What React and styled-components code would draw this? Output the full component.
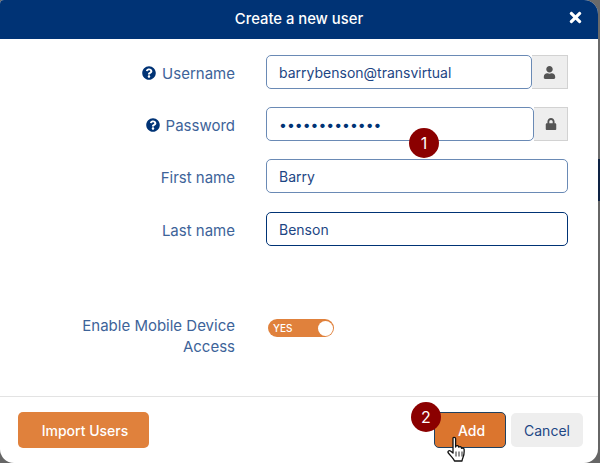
import React from 'react';
import styled, { createGlobalStyle } from 'styled-components';
import { FaQuestionCircle, FaUser, FaLock, FaTimes } from 'react-icons/fa';

const GlobalStyle = createGlobalStyle`
	html, body {
		margin: 0;
		padding: 0;
		width: 600px;
		height: 463px;
		overflow: hidden;
		font-family: Inter, "Liberation Sans", sans-serif;
		background: linear-gradient(to bottom, #6a6a6a 0, #6a6a6a 159px, #0e2344 159px, #0e2344 201px, #666 201px, #666 100%);
	}
`

const Modal = styled.div`
	width: 598px;
	height: 463px;
	display: flex;
	flex-direction: column;
	position: relative;
	background: #fff;
	border-radius: 4px 14px 14px 14px;
	overflow: hidden;
`

const Header = styled.div`
	height: 39px;
	flex: none;
	display: flex;
	align-items: center;
	justify-content: center;
	position: relative;
	padding-bottom: 1px;
	box-sizing: border-box;
	background: #003375;
	color: #fff;
	font-size: 14.8px;
	font-weight: 500;
`

const CloseBtn = styled.span`
	position: absolute;
	right: 14px;
	top: 9px;
	display: flex;
	font-size: 17px;
	color: #fff;
`

const Body = styled.div`
	flex: 1;
	display: flex;
	flex-direction: column;
	padding-top: 16px;
`

const Row = styled.div`
	display: grid;
	grid-template-columns: 236px 302px;
	column-gap: 30px;
	align-items: center;
	margin-bottom: ${props => props.gap || 18}px;
`

const Label = styled.label`
	display: flex;
	align-items: center;
	justify-content: flex-end;
	gap: 6px;
	padding: 2px 1px 0 0;
	font-size: 15px;
	line-height: 21px;
	color: #3d6399;
	text-align: right;
`

const HelpIcon = styled(FaQuestionCircle)`
	width: 14px;
	height: 14px;
	color: #003375;
`

const InputGroup = styled.div`
	display: flex;
	width: 100%;
`

const Input = styled.div`
	flex: 1;
	height: 34px;
	box-sizing: border-box;
	display: flex;
	align-items: center;
	padding-left: 12px;
	border: 1px solid ${props => props.focused ? '#003375' : '#6a8ab5'};
	border-radius: 5px;
	background: #fff;
	font-size: 14px;
	color: #1d4684;
`

const Dots = styled.span`
	font-size: 14px;
	color: #003375;
`

const Addon = styled.div`
	width: ${props => props.width}px;
	height: 34px;
	box-sizing: border-box;
	display: flex;
	align-items: center;
	justify-content: center;
	background: #eee;
	border: 1px solid #d2d2d2;
	border-left: none;
	color: #555;
	font-size: ${props => props.iconSize}px;
`

const ToggleRow = styled(Row)`
	margin-top: 51px;
	align-items: start;
`

const ToggleLabel = styled(Label)`
	display: block;
	padding-top: 0;
`

const Toggle = styled.div`
	width: 66px;
	height: 18px;
	margin: 4px 0 0 2px;
	display: flex;
	align-items: center;
	justify-content: space-between;
	box-sizing: border-box;
	padding: 0 1.5px 0 5px;
	border-radius: 9px;
	background: #e0813c;
	color: #fff;
	font-size: 10px;
	font-weight: 500;
`

const Knob = styled.span`
	width: 15px;
	height: 15px;
	border-radius: 50%;
	background: #fff;
`

const Footer = styled.div`
	height: 67px;
	flex: none;
	box-sizing: border-box;
	display: flex;
	justify-content: space-between;
	align-items: flex-start;
	padding: 15px 15px 0 18px;
	border-top: 1px solid #e3e3e3;
`

const Actions = styled.div`
	display: flex;
	align-items: center;
	gap: 5px;
`

const Button = styled.button`
	width: ${props => props.width}px;
	height: 36px;
	box-sizing: border-box;
	border: none;
	border-radius: 5px;
	background: #e0813c;
	color: #fff;
	font-family: inherit;
	font-size: 14px;
	font-weight: 500;
	padding: 0 0 0 3px;
`

const AddBtn = styled(Button)`
	background: #db752e;
	border: 1px solid #1d4060;
`

const CancelBtn = styled(Button)`
	height: 34px;
	padding: 0;
	background: #eee;
	color: #1d4684;
	font-weight: 400;
`

const Badge = styled.span`
	position: absolute;
	left: ${props => props.x}px;
	top: ${props => props.y}px;
	width: 30px;
	height: 30px;
	display: flex;
	align-items: center;
	justify-content: center;
	border-radius: 50%;
	background: #8b0000;
	color: #fff;
	font-size: 16px;
`

const Cursor = styled.svg`
	position: absolute;
	left: 447px;
	top: 436px;
	width: 22px;
	height: 27px;
`

const App = () => (
	<>
		<GlobalStyle />
		<Modal>
			<Header>
				Create a new user
				<CloseBtn><FaTimes /></CloseBtn>
			</Header>
			<Body>
				<Row>
					<Label><HelpIcon />Username</Label>
					<InputGroup>
						<Input>barrybenson@transvirtual</Input>
						<Addon width={36} iconSize={13}><FaUser /></Addon>
					</InputGroup>
				</Row>
				<Row>
					<Label><HelpIcon />Password</Label>
					<InputGroup>
						<Input><Dots>•••••••••••••</Dots></Input>
						<Addon width={34} iconSize={12}><FaLock /></Addon>
					</InputGroup>
				</Row>
				<Row gap={19}>
					<Label>First name</Label>
					<Input>Barry</Input>
				</Row>
				<Row>
					<Label>Last name</Label>
					<Input focused>Benson</Input>
				</Row>
				<ToggleRow>
					<ToggleLabel>Enable Mobile Device<br />Access</ToggleLabel>
					<Toggle>YES<Knob /></Toggle>
				</ToggleRow>
			</Body>
			<Footer>
				<Button width={131}>Import Users</Button>
				<Actions>
					<AddBtn width={72}>Add</AddBtn>
					<CancelBtn width={72}>Cancel</CancelBtn>
				</Actions>
			</Footer>
			<Badge x={409} y={128}>1</Badge>
			<Badge x={411} y={402}>2</Badge>
			<Cursor viewBox="0 0 22 27">
				<path d="M6 2.5c0-1.600 2.600-1.600 2.600 0V11l.4-1c1-.8 2.400-.4 2.600.6l.2.6c.8-1 2.400-.6 2.600.6l.2.6c1-.8 2.400-.2 2.500 1 .2 2.600 0 5.600-1.100 8-.6 1.400-1 2.600-1 3.600H7.500c-.6-1.800-2-3-3.500-4.800L1.300 17c-1-1.500.8-3 2.200-1.900L6 17V2.500z" fill="#fff" stroke="#111" strokeWidth="1.300" strokeLinejoin="round" />
				<path d="M9 15.500v5M12 15.500v5M15 15.500v5" stroke="#111" strokeWidth="0.900" />
			</Cursor>
		</Modal>
	</>
);

export default App;
